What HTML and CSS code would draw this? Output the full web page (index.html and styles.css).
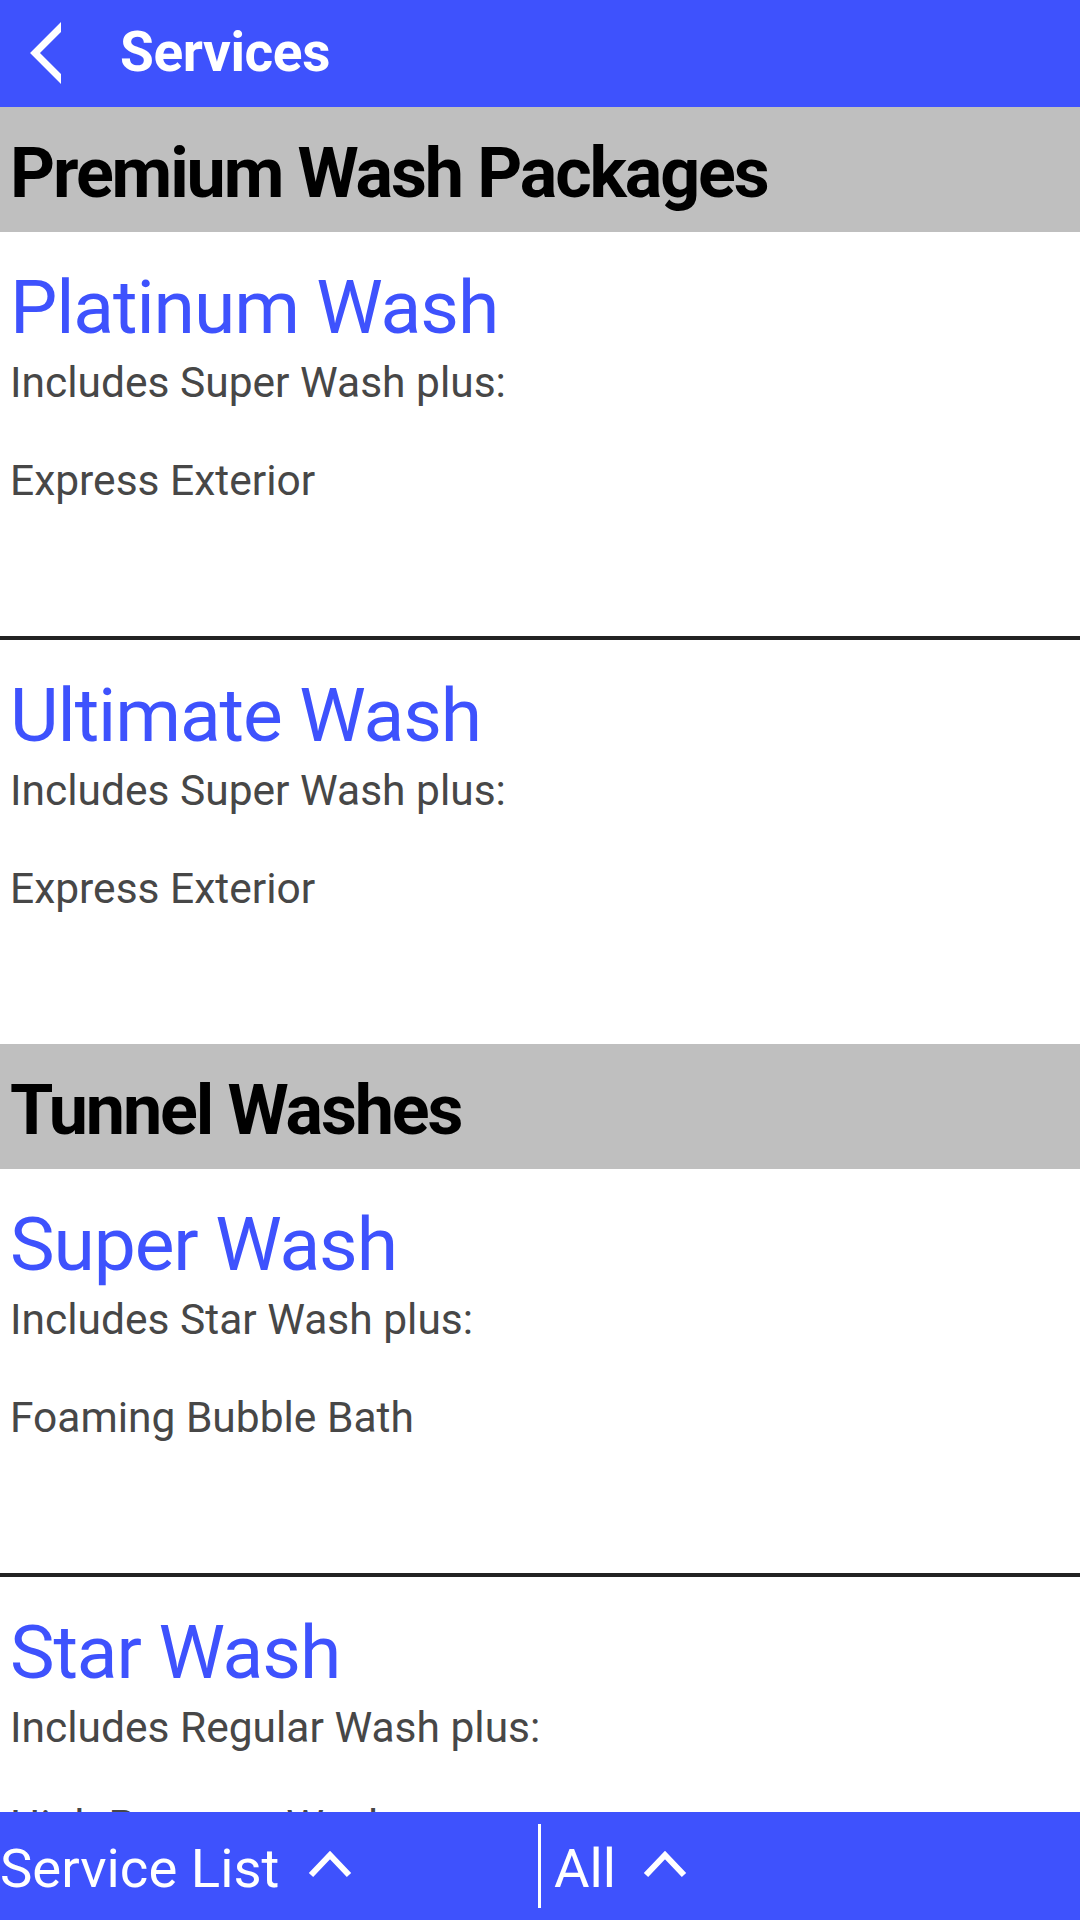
FILE: index.html
```html
<!DOCTYPE html>
<html lang="en">
<head>
<meta charset="utf-8">
<title>Services</title>
<link rel="stylesheet" href="styles.css">
</head>
<body>
<div class="screen">
  <header class="appbar">
    <svg class="back" width="34" height="70" viewBox="0 0 34 70" aria-hidden="true">
      <polyline points="40,3 8,35 40,67" fill="none" stroke="#fff" stroke-width="7" stroke-linejoin="miter"/>
    </svg>
    <h1 class="appbar-title">Services</h1>
  </header>

  <main class="content">
    <section class="group">
      <h2 class="group-title">Premium Wash Packages</h2>
      <article class="item">
        <h3 class="item-title">Platinum Wash</h3>
        <p class="item-desc">Includes Super Wash plus:

Express Exterior</p>
      </article>
      <article class="item">
        <h3 class="item-title">Ultimate Wash</h3>
        <p class="item-desc">Includes Super Wash plus:

Express Exterior</p>
      </article>
    </section>

    <section class="group">
      <h2 class="group-title">Tunnel Washes</h2>
      <article class="item">
        <h3 class="item-title">Super Wash</h3>
        <p class="item-desc">Includes Star Wash plus:

Foaming Bubble Bath</p>
      </article>
      <article class="item">
        <h3 class="item-title">Star Wash</h3>
        <p class="item-desc">Includes Regular Wash plus:

High Pressure Wash</p>
      </article>
    </section>
  </main>

  <footer class="bottombar">
    <div class="filter filter-left">
      <span class="filter-label">Service List</span>
      <svg class="chev" width="44" height="30" viewBox="0 0 44 30" aria-hidden="true">
        <polyline points="3,26 22,6 41,26" fill="none" stroke="#fff" stroke-width="6"/>
      </svg>
    </div>
    <div class="sep"></div>
    <div class="filter filter-right">
      <span class="filter-label">All</span>
      <svg class="chev" width="44" height="30" viewBox="0 0 44 30" aria-hidden="true">
        <polyline points="3,26 22,6 41,26" fill="none" stroke="#fff" stroke-width="6"/>
      </svg>
    </div>
  </footer>
</div>
</body>
</html>
```

FILE: styles.css
```css
* {
  box-sizing: border-box;
}

html, body {
  margin: 0;
  padding: 0;
  background: #ffffff;
}

body {
  font-family: Roboto, "Liberation Sans", sans-serif;
}

.screen {
  width: 1080px;
  height: 1920px;
  display: flex;
  flex-direction: column;
  overflow: hidden;
}

/* Top app bar */
.appbar {
  height: 107px;
  flex: 0 0 107px;
  background: #3e52fd;
  display: flex;
  align-items: flex-start;
}

.back {
  display: block;
  margin: 18px 0 0 27px;
  overflow: hidden;
}

.appbar-title {
  margin: 0 0 0 59px;
  font-size: 55px;
  font-weight: 700;
  color: #ffffff;
  line-height: 105px;
  letter-spacing: -0.4px;
}

/* Scrolling list */
.content {
  flex: 1 1 auto;
  overflow: hidden;
}

.group-title {
  margin: 0;
  height: 125px;
  padding: 8px 10px 0;
  background: #bfbfbf;
  color: #000000;
  font-size: 70px;
  font-weight: 700;
  line-height: 117px;
  letter-spacing: -2.1px;
  white-space: nowrap;
}

.item {
  height: 404px;
  padding: 31px 10px 0;
}

.item + .item {
  height: 408px;
  border-top: 4px solid #222222;
}

.item-title {
  margin: 0;
  font-size: 75px;
  font-weight: 400;
  line-height: 88px;
  letter-spacing: -1.1px;
  color: #3e52fd;
}

.item-desc {
  margin: 7px 0 0;
  font-size: 42.5px;
  line-height: 49px;
  color: #474747;
  white-space: pre-line;
}

/* Bottom filter bar */
.bottombar {
  height: 108px;
  flex: 0 0 108px;
  background: #3e52fd;
  display: flex;
  align-items: flex-start;
  color: #ffffff;
}

.filter {
  display: flex;
  align-items: flex-start;
}

.filter-left {
  width: 538px;
}

.filter-right {
  padding-left: 13px;
}

.filter-label {
  font-size: 54.5px;
  line-height: 104px;
  padding-top: 4px;
  display: block;
  white-space: nowrap;
}

.filter-left .chev {
  margin: 37px 0 0 29px;
}

.filter-right .chev {
  margin: 37px 0 0 27px;
}

.chev {
  display: block;
}

.sep {
  width: 3px;
  height: 84px;
  margin-top: 12px;
  background: #ffffff;
}
```
